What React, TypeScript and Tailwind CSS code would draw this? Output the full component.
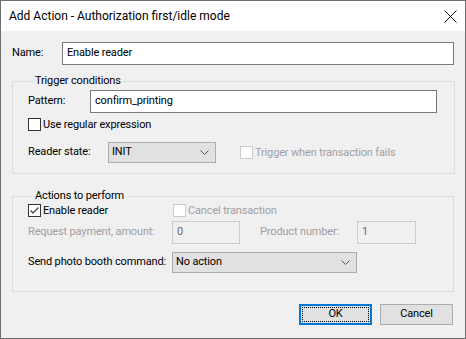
import React from 'react';

const font = { fontFamily: 'Roboto, "Noto Sans", sans-serif' };

function Checkbox({ label, checked = false, disabled = false }: { label: string; checked?: boolean; disabled?: boolean }) {
    return (
        <label className={`flex items-center gap-[2px] whitespace-nowrap ${disabled ? 'text-[#a0a0a0]' : 'text-black'}`}>
            <span
                className={`flex h-[13px] w-[13px] shrink-0 items-center justify-center border bg-white ${
                    disabled ? 'border-[#cccccc]' : 'border-[#333333]'
                }`}
            >
                {checked && (
                    <svg width="11" height="11" viewBox="0 0 11 11">
                        <path d="M1.5 5.5 L4 8 L9.5 2.5" fill="none" stroke="#333" strokeWidth="1.1" />
                    </svg>
                )}
            </span>
            <span className="leading-none">{label}</span>
        </label>
    );
}

function Combo({ value, width }: { value: string; width: string }) {
    return (
        <div className={`flex h-[21px] shrink-0 items-center justify-between border border-[#adadad] bg-[#e1e1e1] pl-[3px] pr-[6px] ${width}`}>
            <span>{value}</span>
            <svg width="9" height="6" viewBox="0 0 9 6">
                <path d="M0.5 0.5 L4.5 4.5 L8.5 0.5" fill="none" stroke="#555" strokeWidth="1" />
            </svg>
        </div>
    );
}

function TextBox({ value, width, disabled = false }: { value: string; width: string; disabled?: boolean }) {
    return (
        <div
            className={`flex h-[23px] shrink-0 items-center border px-[4px] ${width} ${
                disabled ? 'border-[#cccccc] bg-[#f0f0f0] text-[#6d6d6d]' : 'border-[#7a7a7a] bg-white text-black'
            }`}
        >
            {value}
        </div>
    );
}

export default function App() {
    return (
        <div
            className="flex h-[339px] w-[466px] flex-col border border-[#6f6f6f] bg-[#f0f0f0] text-[11px] tracking-[-0.15px] text-black"
            style={font}
        >
            {/* title bar */}
            <div className="flex h-[30px] shrink-0 items-center justify-between bg-white pl-[8px] pr-[8px]">
                <span className="text-[12px] tracking-normal">Add Action - Authorization first/idle mode</span>
                <svg width="13" height="13" viewBox="0 0 13 13">
                    <path d="M0.5 0.5 L12.5 12.5 M12.5 0.5 L0.5 12.5" stroke="#111" strokeWidth="1" />
                </svg>
            </div>

            <div className="flex flex-1 flex-col px-[11px]">
                <div className="mt-[11px] flex items-center">
                    <span className="w-[52px]">Name:</span>
                    <TextBox value="Enable reader" width="w-[392px]" />
                </div>

                <fieldset className="mt-[9px] h-[100px] border border-[#dcdcdc] pl-[15px] pr-[17px]">
                    <legend className="ml-[5px] whitespace-nowrap px-[2px] leading-[14px]">Trigger conditions</legend>
                    <div className="mt-[2px] flex items-center">
                        <span className="w-[62px]">Pattern:</span>
                        <TextBox value="confirm_printing" width="w-[347px]" />
                    </div>
                    <div className="mt-[5px]">
                        <Checkbox label="Use regular expression" />
                    </div>
                    <div className="mt-[11px] flex items-center">
                        <span className="w-[80px]">Reader state:</span>
                        <Combo value="INIT" width="w-[108px]" />
                        <div className="ml-[24px]">
                            <Checkbox label="Trigger when transaction fails" disabled />
                        </div>
                    </div>
                </fieldset>

                <fieldset className="mt-[15px] h-[103px] border border-[#dcdcdc] pl-[15px] pr-[17px]">
                    <legend className="ml-[5px] whitespace-nowrap px-[2px] leading-[14px]">Actions to perform</legend>
                    <div className="mt-[1px] flex items-center">
                        <div className="w-[145px]">
                            <Checkbox label="Enable reader" checked />
                        </div>
                        <Checkbox label="Cancel transaction" disabled />
                    </div>
                    <div className="mt-[4px] flex items-center whitespace-nowrap text-[#a0a0a0]">
                        <span className="w-[144px]">Request payment, amount:</span>
                        <TextBox value="0" width="w-[68px]" disabled />
                        <span className="ml-[20px] w-[97px]">Product number:</span>
                        <TextBox value="1" width="w-[59px]" disabled />
                    </div>
                    <div className="mt-[8px] flex items-center whitespace-nowrap">
                        <span className="w-[144px]">Send photo booth command:</span>
                        <Combo value="No action" width="w-[185px]" />
                    </div>
                </fieldset>

                <div className="mt-[12px] flex justify-end gap-[8px] pr-[1px]">
                    <div className="flex h-[21px] w-[73px] items-center justify-center border-2 border-[#0078d7] bg-[#e1e1e1] p-[1px]">
                        <div className="flex h-full w-full items-center justify-center border border-dotted border-black">
                            OK
                        </div>
                    </div>
                    <div className="flex h-[21px] w-[73px] items-center justify-center border border-[#adadad] bg-[#e1e1e1]">
                        Cancel
                    </div>
                </div>
            </div>
        </div>
    );
}
